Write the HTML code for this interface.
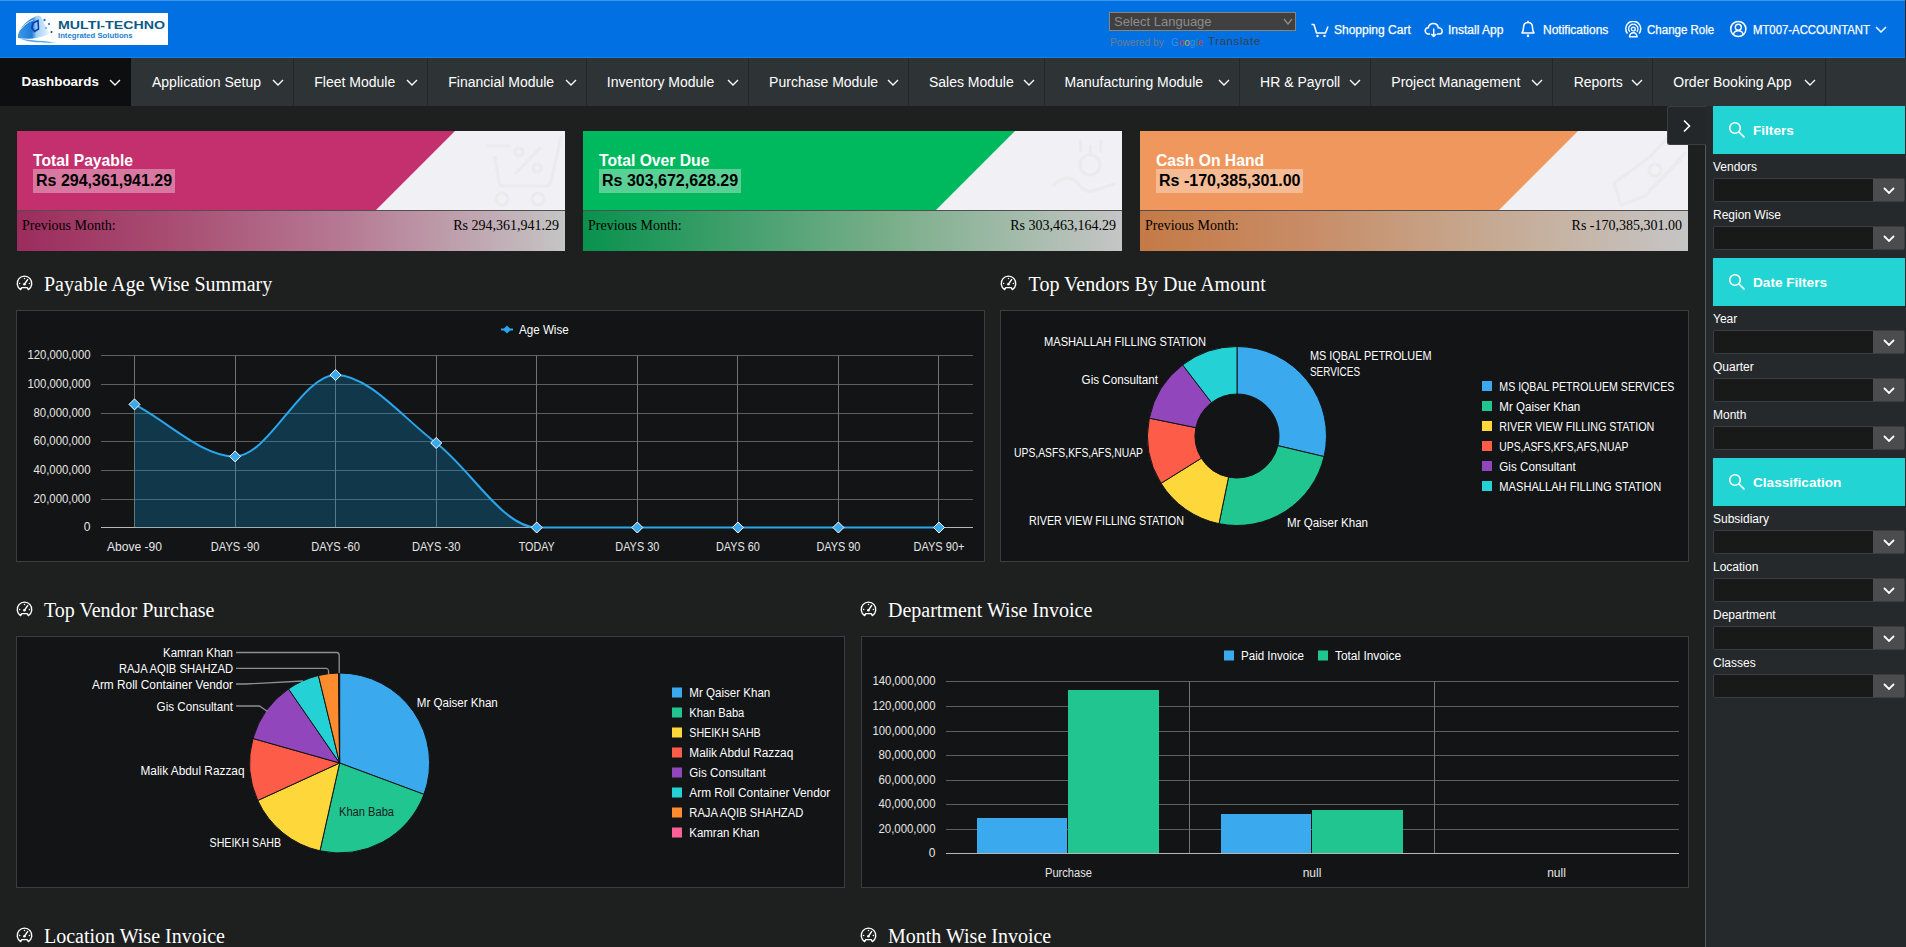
<!DOCTYPE html>
<html><head><meta charset="utf-8"><style>
*{box-sizing:border-box;margin:0;padding:0}
html,body{width:1906px;height:947px;overflow:hidden;background:#1e201f;font-family:"Liberation Sans",sans-serif;color:#fff}
.a{position:absolute;white-space:nowrap;line-height:1}
#hdr{position:absolute;left:0;top:0;width:1906px;height:58px;background:#0070e3;border-top:1px solid #3c96e9;border-bottom:1px solid #0a86ec}
#nav{position:absolute;left:0;top:58px;width:1906px;height:48px;background:#2e3336}
.sep{position:absolute;top:0;width:1px;height:48px;background:#23272a}
.nt{position:absolute;top:17px;font-size:14px;line-height:14px;color:#fff;white-space:nowrap}
.card{position:absolute;top:131px;height:120px;overflow:hidden}
.card .wt{position:absolute;top:0;right:0;width:200px;height:79px;background:#f1f1f5}
.card .ttl{position:absolute;left:16px;top:22px;font-weight:bold;font-size:15.7px;line-height:16px;color:#fff;white-space:nowrap}
.card .amt{position:absolute;left:16px;top:38px;height:24px;padding:0 3px;font-weight:bold;font-size:16px;line-height:24px;color:#000;background:rgba(255,255,255,.35);white-space:nowrap}
.card .bot{position:absolute;left:0;top:79px;right:0;height:41px;border-top:1px solid #505050}
.card .pm{position:absolute;left:5px;top:8px;font-family:"Liberation Serif",serif;font-size:14px;line-height:14px;color:#000;white-space:nowrap}
.card .pr{position:absolute;right:6px;top:8px;font-family:"Liberation Serif",serif;font-size:14px;line-height:14px;color:#000;white-space:nowrap}
.stitle{position:absolute;font-family:"Liberation Serif",serif;font-size:20px;line-height:20px;color:#fff;white-space:nowrap}
.panel{position:absolute;background:#121416;border:1px solid #3b3d3f}
#side{position:absolute;left:1705px;top:106px;width:201px;height:841px;background:#25292c;border-left:1px solid #55585b}
.sh{position:absolute;left:7px;width:192px;height:48px;background:#23d4d4}
.sh span{position:absolute;left:40px;top:17.5px;font-size:13.6px;line-height:14px;font-weight:bold;color:#fff;white-space:nowrap}
.sh svg{position:absolute;left:14.5px;top:15px}
.sl{position:absolute;left:7px;font-size:12px;line-height:12px;color:#fff;white-space:nowrap}
.ss{position:absolute;left:7px;width:192px;height:24px;background:#181a19;border:1px solid #3a3d40;border-radius:2px}
.ss i{position:absolute;right:0;top:0;width:31px;height:22px;background:#4b4c4e}
.ss svg{position:absolute;right:9px;top:8px}
.hi{position:absolute;top:24px;font-size:12px;line-height:12px;color:#fff;white-space:nowrap;-webkit-text-stroke:0.25px #fff}
</style></head><body>
<div id="hdr"></div>
<div class="a" style="left:16px;top:13px;width:152px;height:32px;background:#fff;overflow:hidden"><svg class="a" style="left:0;top:0" width="44" height="32"><defs><linearGradient id="lg1" x1="0" y1="0" x2="1" y2="0"><stop offset="0" stop-color="#3d9ae6"/><stop offset="0.45" stop-color="#1f7ad8"/><stop offset="0.6" stop-color="#9fd0f5"/><stop offset="1" stop-color="#e4f3fd"/></linearGradient></defs><path d="M2 22 C4 14 12 6 22 2.5 L25 3.5 L33 21 C25 25 12 27 2 25 Z" fill="url(#lg1)"/><path d="M4 17 C8 12 12 9 17 7" stroke="#cfe8fb" stroke-width="1" fill="none"/><path d="M4 25.5 C12 29.5 26 30 41 29.5 C28 28 14 27.5 4 25.5Z" fill="#4aa8ec"/><path d="M17 10 L22 7.5 L22.5 16 L18.5 18.5 L16 15 Z" fill="none" stroke="#0a3cae" stroke-width="1.6"/><circle cx="28.5" cy="7" r="1.2" fill="#1f7ad8"/><circle cx="33" cy="11" r="1.1" fill="#1f6fd0"/><circle cx="35.5" cy="19" r="1" fill="#0a3cae"/><circle cx="30" cy="15" r="1.1" fill="#5ab4ee"/></svg><div class="a" style="left:42px;top:8px;font-weight:bold;font-size:10px;color:#0b5a86;transform-origin:0 0;transform:scaleX(1.42)">MULTI-TECHNO</div><div class="a" style="left:42px;top:19px;font-weight:bold;font-size:8px;color:#1a7fd0;transform-origin:0 0;transform:scaleX(0.965)">Integrated Solutions</div></div>
<div class="a" style="left:1109px;top:12px;width:187px;height:19px;background:#404040;border:1px solid #8e8478"></div>
<div class="a" style="left:1114px;top:15px;font-size:13px;line-height:13px;color:#8c8c8c">Select Language</div>
<svg class="a" style="left:1283px;top:18px" width="10" height="7"><path d="M1 1 L5.0 6 L9 1" fill="none" stroke="#8c8c8c" stroke-width="1.3"/></svg>
<div class="a" style="left:1110px;top:37px;font-size:10.5px;line-height:11px;color:#6b7d90;transform-origin:0 0;transform:scaleX(.97)">Powered by</div>
<div class="a" style="left:1171px;top:37px;font-size:10.5px;line-height:11px;opacity:.85;transform-origin:0 0;transform:scaleX(.95)"><span style="color:#4a90e2">G</span><span style="color:#d8453a">o</span><span style="color:#e8b400">o</span><span style="color:#4a90e2">g</span><span style="color:#2ea44f">l</span><span style="color:#d8453a">e</span></div>
<div class="a" style="left:1208px;top:36px;font-size:11.5px;line-height:11px;color:#3a3f48;letter-spacing:.6px">Translate</div>
<svg class="a" style="left:1310px;top:22px" width="20" height="16"><path d="M1.5 2.5 H4 L6.5 11 H15.5 L18 4.5" fill="none" stroke="#fff" stroke-width="1.5" stroke-linejoin="round"/><circle cx="7.5" cy="14" r="1.2" fill="#fff"/><circle cx="14.5" cy="14" r="1.2" fill="#fff"/></svg>
<div class="hi" style="left:1334px">Shopping Cart</div>
<svg class="a" style="left:1424px;top:22px" width="20" height="16"><path d="M6 12 H4.5 C2.5 12 1.2 10.5 1.2 8.8 C1.2 7 2.6 5.7 4.3 5.7 C4.8 3.2 6.8 1.5 9.3 1.5 C12 1.5 14 3.5 14.3 5.8 C16.5 5.8 18.2 7.3 18.2 9.2 C18.2 10.8 17 12 15.3 12 H13" fill="none" stroke="#fff" stroke-width="1.5"/><path d="M9.7 6.5 V14.5 M7.2 12 L9.7 14.5 L12.2 12" fill="none" stroke="#fff" stroke-width="1.5"/></svg>
<div class="hi" style="left:1448px">Install App</div>
<svg class="a" style="left:1519px;top:20px" width="18" height="18"><path d="M3 13 C4.3 11.5 4.5 10 4.5 7.5 C4.5 4.5 6.3 2.5 9 2.5 C11.7 2.5 13.5 4.5 13.5 7.5 C13.5 10 13.7 11.5 15 13 Z" fill="none" stroke="#fff" stroke-width="1.5" stroke-linejoin="round"/><path d="M9 0.8 V2.5" stroke="#fff" stroke-width="1.5"/><circle cx="9" cy="15.8" r="1.3" fill="#fff"/></svg>
<div class="hi" style="left:1543px">Notifications</div>
<svg class="a" style="left:1624px;top:21px" width="19" height="17"><path d="M3.5 12.5 A7.5 7.5 0 1 1 15 12.5" fill="none" stroke="#fff" stroke-width="1.5"/><path d="M5.8 10.8 A4.6 4.6 0 1 1 12.8 10.8" fill="none" stroke="#fff" stroke-width="1.4"/><circle cx="9.3" cy="8" r="1.9" fill="none" stroke="#fff" stroke-width="1.4"/><path d="M5.5 15.8 C5.8 13 7.3 11.7 9.3 11.7 C11.3 11.7 12.8 13 13.1 15.8 Z" fill="none" stroke="#fff" stroke-width="1.4"/></svg>
<div class="hi" style="left:1647px;transform-origin:0 0;transform:scaleX(.96)">Change Role</div>
<svg class="a" style="left:1729px;top:20px" width="19" height="18"><circle cx="9.3" cy="9" r="7.6" fill="none" stroke="#fff" stroke-width="1.5"/><circle cx="9.3" cy="7.3" r="3" fill="none" stroke="#fff" stroke-width="1.4"/><path d="M4.3 14.6 C5 12 7 10.8 9.3 10.8 C11.6 10.8 13.6 12 14.3 14.6" fill="none" stroke="#fff" stroke-width="1.4"/></svg>
<div class="hi" style="left:1753px;transform-origin:0 0;transform:scaleX(.945)">MT007-ACCOUNTANT</div>
<svg class="a" style="left:1875px;top:26px" width="12" height="7"><path d="M1 1 L6.0 6 L11 1" fill="none" stroke="#fff" stroke-width="1.5"/></svg>
<div class="a" style="left:1905px;top:0;width:1px;height:58px;background:#2a2a2a"></div>
<div id="nav"></div>
<div class="a" style="left:0;top:58px;width:131px;height:48px;background:#0d0e10"></div>
<div class="sep" style="left:293px;top:58px"></div>
<div class="sep" style="left:427px;top:58px"></div>
<div class="sep" style="left:586px;top:58px"></div>
<div class="sep" style="left:748px;top:58px"></div>
<div class="sep" style="left:908px;top:58px"></div>
<div class="sep" style="left:1044px;top:58px"></div>
<div class="sep" style="left:1239px;top:58px"></div>
<div class="sep" style="left:1370px;top:58px"></div>
<div class="sep" style="left:1552px;top:58px"></div>
<div class="sep" style="left:1652px;top:58px"></div>
<div class="sep" style="left:1825px;top:58px"></div>
<div class="nt" style="left:21.5px;top:75px;font-weight:bold;font-size:13.4px;">Dashboards</div>
<svg class="a" style="left:109px;top:79px" width="12" height="7"><path d="M1 1 L6.0 6 L11 1" fill="none" stroke="#fff" stroke-width="1.4"/></svg>
<div class="nt" style="left:152px;top:75px;">Application Setup</div>
<svg class="a" style="left:271.5px;top:79px" width="12" height="7"><path d="M1 1 L6.0 6 L11 1" fill="none" stroke="#fff" stroke-width="1.4"/></svg>
<div class="nt" style="left:314.3px;top:75px;">Fleet Module</div>
<svg class="a" style="left:405.5px;top:79px" width="12" height="7"><path d="M1 1 L6.0 6 L11 1" fill="none" stroke="#fff" stroke-width="1.4"/></svg>
<div class="nt" style="left:448.3px;top:75px;">Financial Module</div>
<svg class="a" style="left:564.5px;top:79px" width="12" height="7"><path d="M1 1 L6.0 6 L11 1" fill="none" stroke="#fff" stroke-width="1.4"/></svg>
<div class="nt" style="left:606.8px;top:75px;">Inventory Module</div>
<svg class="a" style="left:726.5px;top:79px" width="12" height="7"><path d="M1 1 L6.0 6 L11 1" fill="none" stroke="#fff" stroke-width="1.4"/></svg>
<div class="nt" style="left:769.1px;top:75px;">Purchase Module</div>
<svg class="a" style="left:886.5px;top:79px" width="12" height="7"><path d="M1 1 L6.0 6 L11 1" fill="none" stroke="#fff" stroke-width="1.4"/></svg>
<div class="nt" style="left:928.9px;top:75px;">Sales Module</div>
<svg class="a" style="left:1022.5px;top:79px" width="12" height="7"><path d="M1 1 L6.0 6 L11 1" fill="none" stroke="#fff" stroke-width="1.4"/></svg>
<div class="nt" style="left:1064.5px;top:75px;">Manufacturing Module</div>
<svg class="a" style="left:1217.5px;top:79px" width="12" height="7"><path d="M1 1 L6.0 6 L11 1" fill="none" stroke="#fff" stroke-width="1.4"/></svg>
<div class="nt" style="left:1260.1px;top:75px;">HR &amp; Payroll</div>
<svg class="a" style="left:1348.5px;top:79px" width="12" height="7"><path d="M1 1 L6.0 6 L11 1" fill="none" stroke="#fff" stroke-width="1.4"/></svg>
<div class="nt" style="left:1391.3px;top:75px;">Project Management</div>
<svg class="a" style="left:1530.5px;top:79px" width="12" height="7"><path d="M1 1 L6.0 6 L11 1" fill="none" stroke="#fff" stroke-width="1.4"/></svg>
<div class="nt" style="left:1573.7px;top:75px;">Reports</div>
<svg class="a" style="left:1630.5px;top:79px" width="12" height="7"><path d="M1 1 L6.0 6 L11 1" fill="none" stroke="#fff" stroke-width="1.4"/></svg>
<div class="nt" style="left:1673.3px;top:75px;">Order Booking App</div>
<svg class="a" style="left:1803.5px;top:79px" width="12" height="7"><path d="M1 1 L6.0 6 L11 1" fill="none" stroke="#fff" stroke-width="1.4"/></svg>
<div class="card" style="left:17px;width:548px;background:#c4306d"><svg class="a" style="left:359px;top:0" width="189" height="79"><path d="M79 0 H189 V79 H0 Z" fill="#f1f1f5"/><g transform="translate(-376,-131)"><path d="M488 146 H509" fill="none" stroke="#ebebee" stroke-width="3.2" stroke-linecap="round" stroke-linejoin="round"/><path d="M495 157 L499 182 Q500 186 505 186 H545 Q550 186 551 181 L561 137" fill="none" stroke="#ebebee" stroke-width="3.2" stroke-linecap="round" stroke-linejoin="round"/><circle cx="502" cy="199" r="6" fill="none" stroke="#ebebee" stroke-width="3.2" stroke-linecap="round" stroke-linejoin="round"/><circle cx="538" cy="199" r="6" fill="none" stroke="#ebebee" stroke-width="3.2" stroke-linecap="round" stroke-linejoin="round"/><circle cx="519" cy="152" r="4" fill="none" stroke="#ebebee" stroke-width="3.2" stroke-linecap="round" stroke-linejoin="round"/><circle cx="537" cy="168" r="4" fill="none" stroke="#ebebee" stroke-width="3.2" stroke-linecap="round" stroke-linejoin="round"/><path d="M516 173 L540 148" fill="none" stroke="#ebebee" stroke-width="3.2" stroke-linecap="round" stroke-linejoin="round"/></g></svg><div class="ttl">Total Payable</div><div class="amt">Rs 294,361,941.29</div><div class="bot" style="background:linear-gradient(90deg,#9c2c5e 0%,#a95073 30%,#b67a93 60%,#c5c5c5 100%)"><div class="pm">Previous Month:</div><div class="pr">Rs 294,361,941.29</div></div></div>
<div class="card" style="left:583px;width:539px;background:#00b85e"><svg class="a" style="left:353px;top:0" width="189" height="79"><path d="M79 0 H189 V79 H0 Z" fill="#f1f1f5"/><g transform="translate(-936,-131)"><path d="M1080.5 141 V151 M1100.5 141 V151 M1090.5 146 V152" fill="none" stroke="#ebebee" stroke-width="3.2" stroke-linecap="round" stroke-linejoin="round"/><circle cx="1090" cy="165" r="10" fill="none" stroke="#ebebee" stroke-width="3.2" stroke-linecap="round" stroke-linejoin="round"/><path d="M1054 185 Q1066 172 1078 183 Q1086 195 1096 190 L1114 184" fill="none" stroke="#ebebee" stroke-width="3.2" stroke-linecap="round" stroke-linejoin="round" stroke-width="4.5"/></g></svg><div class="ttl">Total Over Due</div><div class="amt">Rs 303,672,628.29</div><div class="bot" style="background:linear-gradient(90deg,#08924e 0%,#45a06e 30%,#7fb08e 60%,#c5c5c5 100%)"><div class="pm">Previous Month:</div><div class="pr">Rs 303,463,164.29</div></div></div>
<div class="card" style="left:1140px;width:548px;background:#f0975d"><svg class="a" style="left:359px;top:0" width="189" height="79"><path d="M79 0 H189 V79 H0 Z" fill="#f1f1f5"/><g transform="translate(-1499,-131)"><path d="M1614 183 L1621 205 L1645 196 L1670 170 L1685 153" fill="none" stroke="#ebebee" stroke-width="3.2" stroke-linecap="round" stroke-linejoin="round"/><path d="M1614 183 L1650 157 L1668 137" fill="none" stroke="#ebebee" stroke-width="3.2" stroke-linecap="round" stroke-linejoin="round"/><circle cx="1655" cy="170" r="6" fill="none" stroke="#ebebee" stroke-width="3.2" stroke-linecap="round" stroke-linejoin="round"/><path d="M1650 190 L1680 160" fill="none" stroke="#ebebee" stroke-width="3.2" stroke-linecap="round" stroke-linejoin="round"/></g></svg><div class="ttl">Cash On Hand</div><div class="amt">Rs -170,385,301.00</div><div class="bot" style="background:linear-gradient(90deg,#c47a46 0%,#c88c66 30%,#c6a68c 60%,#c5c5c5 100%)"><div class="pm">Previous Month:</div><div class="pr">Rs -170,385,301.00</div></div></div>
<svg class="a" style="left:16px;top:275px" width="17" height="16"><path d="M4.6 14.6 A7.3 7.3 0 1 1 12.4 14.6 L11.2 12.6 H5.8 Z" fill="none" stroke="#fff" stroke-width="1.4" stroke-linejoin="round"/><path d="M8.5 9.2 L11.6 4.6" stroke="#fff" stroke-width="1.5" stroke-linecap="round"/><circle cx="8.4" cy="9.3" r="1.3" fill="#fff"/><circle cx="3.6" cy="8.4" r=".75" fill="#fff"/><circle cx="8.5" cy="3.5" r=".75" fill="#fff"/><circle cx="13.4" cy="8.4" r=".75" fill="#fff"/></svg>
<div class="stitle" style="left:44px;top:274px">Payable Age Wise Summary</div>
<svg class="a" style="left:1000px;top:275px" width="17" height="16"><path d="M4.6 14.6 A7.3 7.3 0 1 1 12.4 14.6 L11.2 12.6 H5.8 Z" fill="none" stroke="#fff" stroke-width="1.4" stroke-linejoin="round"/><path d="M8.5 9.2 L11.6 4.6" stroke="#fff" stroke-width="1.5" stroke-linecap="round"/><circle cx="8.4" cy="9.3" r="1.3" fill="#fff"/><circle cx="3.6" cy="8.4" r=".75" fill="#fff"/><circle cx="8.5" cy="3.5" r=".75" fill="#fff"/><circle cx="13.4" cy="8.4" r=".75" fill="#fff"/></svg>
<div class="stitle" style="left:1028.6px;top:274px">Top Vendors By Due Amount</div>
<svg class="a" style="left:16px;top:601px" width="17" height="16"><path d="M4.6 14.6 A7.3 7.3 0 1 1 12.4 14.6 L11.2 12.6 H5.8 Z" fill="none" stroke="#fff" stroke-width="1.4" stroke-linejoin="round"/><path d="M8.5 9.2 L11.6 4.6" stroke="#fff" stroke-width="1.5" stroke-linecap="round"/><circle cx="8.4" cy="9.3" r="1.3" fill="#fff"/><circle cx="3.6" cy="8.4" r=".75" fill="#fff"/><circle cx="8.5" cy="3.5" r=".75" fill="#fff"/><circle cx="13.4" cy="8.4" r=".75" fill="#fff"/></svg>
<div class="stitle" style="left:44px;top:600px">Top Vendor Purchase</div>
<svg class="a" style="left:860px;top:601px" width="17" height="16"><path d="M4.6 14.6 A7.3 7.3 0 1 1 12.4 14.6 L11.2 12.6 H5.8 Z" fill="none" stroke="#fff" stroke-width="1.4" stroke-linejoin="round"/><path d="M8.5 9.2 L11.6 4.6" stroke="#fff" stroke-width="1.5" stroke-linecap="round"/><circle cx="8.4" cy="9.3" r="1.3" fill="#fff"/><circle cx="3.6" cy="8.4" r=".75" fill="#fff"/><circle cx="8.5" cy="3.5" r=".75" fill="#fff"/><circle cx="13.4" cy="8.4" r=".75" fill="#fff"/></svg>
<div class="stitle" style="left:888px;top:600px">Department Wise Invoice</div>
<svg class="a" style="left:16px;top:927px" width="17" height="16"><path d="M4.6 14.6 A7.3 7.3 0 1 1 12.4 14.6 L11.2 12.6 H5.8 Z" fill="none" stroke="#fff" stroke-width="1.4" stroke-linejoin="round"/><path d="M8.5 9.2 L11.6 4.6" stroke="#fff" stroke-width="1.5" stroke-linecap="round"/><circle cx="8.4" cy="9.3" r="1.3" fill="#fff"/><circle cx="3.6" cy="8.4" r=".75" fill="#fff"/><circle cx="8.5" cy="3.5" r=".75" fill="#fff"/><circle cx="13.4" cy="8.4" r=".75" fill="#fff"/></svg>
<div class="stitle" style="left:44px;top:926px">Location Wise Invoice</div>
<svg class="a" style="left:860px;top:927px" width="17" height="16"><path d="M4.6 14.6 A7.3 7.3 0 1 1 12.4 14.6 L11.2 12.6 H5.8 Z" fill="none" stroke="#fff" stroke-width="1.4" stroke-linejoin="round"/><path d="M8.5 9.2 L11.6 4.6" stroke="#fff" stroke-width="1.5" stroke-linecap="round"/><circle cx="8.4" cy="9.3" r="1.3" fill="#fff"/><circle cx="3.6" cy="8.4" r=".75" fill="#fff"/><circle cx="8.5" cy="3.5" r=".75" fill="#fff"/><circle cx="13.4" cy="8.4" r=".75" fill="#fff"/></svg>
<div class="stitle" style="left:888px;top:926px">Month Wise Invoice</div>
<div class="panel" style="left:16px;top:310px;width:969px;height:252px"></div>
<div class="panel" style="left:1000px;top:310px;width:689px;height:252px"></div>
<div class="panel" style="left:16px;top:636px;width:829px;height:252px"></div>
<div class="panel" style="left:861px;top:636px;width:828px;height:252px"></div>
<svg class="a" style="left:0;top:0" width="1906" height="947" font-family="Liberation Sans, sans-serif"><line x1="101" y1="527.5" x2="973" y2="527.5" stroke="#bcb6b0" stroke-width="1"/>
<text x="90.5" y="530.8" text-anchor="end" font-size="12" fill="#e8e6e2">0</text>
<line x1="101" y1="499.5" x2="973" y2="499.5" stroke="#5b6062" stroke-width="1"/>
<text x="90.5" y="502.8" text-anchor="end" font-size="12" fill="#e8e6e2" textLength="57" lengthAdjust="spacingAndGlyphs">20,000,000</text>
<line x1="101" y1="470.5" x2="973" y2="470.5" stroke="#5b6062" stroke-width="1"/>
<text x="90.5" y="473.8" text-anchor="end" font-size="12" fill="#e8e6e2" textLength="57" lengthAdjust="spacingAndGlyphs">40,000,000</text>
<line x1="101" y1="441.5" x2="973" y2="441.5" stroke="#5b6062" stroke-width="1"/>
<text x="90.5" y="444.8" text-anchor="end" font-size="12" fill="#e8e6e2" textLength="57" lengthAdjust="spacingAndGlyphs">60,000,000</text>
<line x1="101" y1="413.5" x2="973" y2="413.5" stroke="#5b6062" stroke-width="1"/>
<text x="90.5" y="416.8" text-anchor="end" font-size="12" fill="#e8e6e2" textLength="57" lengthAdjust="spacingAndGlyphs">80,000,000</text>
<line x1="101" y1="384.5" x2="973" y2="384.5" stroke="#5b6062" stroke-width="1"/>
<text x="90.5" y="387.8" text-anchor="end" font-size="12" fill="#e8e6e2" textLength="63" lengthAdjust="spacingAndGlyphs">100,000,000</text>
<line x1="101" y1="355.5" x2="973" y2="355.5" stroke="#5b6062" stroke-width="1"/>
<text x="90.5" y="358.8" text-anchor="end" font-size="12" fill="#e8e6e2" textLength="63" lengthAdjust="spacingAndGlyphs">120,000,000</text>
<line x1="134.5" y1="355.5" x2="134.5" y2="527" stroke="#6f7477" stroke-width="1"/>
<line x1="235.5" y1="355.5" x2="235.5" y2="527" stroke="#6f7477" stroke-width="1"/>
<line x1="335.5" y1="355.5" x2="335.5" y2="527" stroke="#6f7477" stroke-width="1"/>
<line x1="436.5" y1="355.5" x2="436.5" y2="527" stroke="#6f7477" stroke-width="1"/>
<line x1="536.5" y1="355.5" x2="536.5" y2="527" stroke="#6f7477" stroke-width="1"/>
<line x1="637.5" y1="355.5" x2="637.5" y2="527" stroke="#6f7477" stroke-width="1"/>
<line x1="737.5" y1="355.5" x2="737.5" y2="527" stroke="#6f7477" stroke-width="1"/>
<line x1="838.5" y1="355.5" x2="838.5" y2="527" stroke="#6f7477" stroke-width="1"/>
<line x1="938.5" y1="355.5" x2="938.5" y2="527" stroke="#6f7477" stroke-width="1"/>
<text x="134.5" y="551.0" text-anchor="middle" font-size="12" fill="#e6e6e6" textLength="55" lengthAdjust="spacingAndGlyphs">Above -90</text>
<text x="235.1" y="551.0" text-anchor="middle" font-size="12" fill="#e6e6e6" textLength="48.5" lengthAdjust="spacingAndGlyphs">DAYS -90</text>
<text x="335.6" y="551.0" text-anchor="middle" font-size="12" fill="#e6e6e6" textLength="48.5" lengthAdjust="spacingAndGlyphs">DAYS -60</text>
<text x="436.2" y="551.0" text-anchor="middle" font-size="12" fill="#e6e6e6" textLength="48.5" lengthAdjust="spacingAndGlyphs">DAYS -30</text>
<text x="536.7" y="551.0" text-anchor="middle" font-size="12" fill="#e6e6e6" textLength="36" lengthAdjust="spacingAndGlyphs">TODAY</text>
<text x="637.3" y="551.0" text-anchor="middle" font-size="12" fill="#e6e6e6" textLength="44" lengthAdjust="spacingAndGlyphs">DAYS 30</text>
<text x="737.9" y="551.0" text-anchor="middle" font-size="12" fill="#e6e6e6" textLength="44" lengthAdjust="spacingAndGlyphs">DAYS 60</text>
<text x="838.4" y="551.0" text-anchor="middle" font-size="12" fill="#e6e6e6" textLength="44" lengthAdjust="spacingAndGlyphs">DAYS 90</text>
<text x="939.0" y="551.0" text-anchor="middle" font-size="12" fill="#e6e6e6" textLength="51" lengthAdjust="spacingAndGlyphs">DAYS 90+</text>
<path d="M134.50 404.40 C168.02 421.73 201.54 456.40 235.06 456.40 C268.58 456.40 302.10 375.00 335.62 375.00 C369.14 375.00 402.66 417.88 436.18 443.00 C469.70 468.12 503.22 527.50 536.74 527.50 C570.26 527.50 603.78 527.50 637.30 527.50 C670.82 527.50 704.34 527.50 737.86 527.50 C771.38 527.50 804.90 527.50 838.42 527.50 C871.94 527.50 905.46 527.50 938.98 527.50 L939.0 527.5 L134.5 527.5 Z" fill="#0e8cc3" fill-opacity="0.3"/>
<path d="M134.50 404.40 C168.02 421.73 201.54 456.40 235.06 456.40 C268.58 456.40 302.10 375.00 335.62 375.00 C369.14 375.00 402.66 417.88 436.18 443.00 C469.70 468.12 503.22 527.50 536.74 527.50 C570.26 527.50 603.78 527.50 637.30 527.50 C670.82 527.50 704.34 527.50 737.86 527.50 C771.38 527.50 804.90 527.50 838.42 527.50 C871.94 527.50 905.46 527.50 938.98 527.50" fill="none" stroke="#2aa6ec" stroke-width="2"/>
<path d="M134.5 398.9 L140.0 404.4 L134.5 409.9 L129.0 404.4 Z" fill="#3aa9ee" stroke="#fff" stroke-width="1"/>
<path d="M235.1 450.9 L240.6 456.4 L235.1 461.9 L229.6 456.4 Z" fill="#3aa9ee" stroke="#fff" stroke-width="1"/>
<path d="M335.6 369.5 L341.1 375.0 L335.6 380.5 L330.1 375.0 Z" fill="#3aa9ee" stroke="#fff" stroke-width="1"/>
<path d="M436.2 437.5 L441.7 443.0 L436.2 448.5 L430.7 443.0 Z" fill="#3aa9ee" stroke="#fff" stroke-width="1"/>
<path d="M536.7 522.0 L542.2 527.5 L536.7 533.0 L531.2 527.5 Z" fill="#3aa9ee" stroke="#fff" stroke-width="1"/>
<path d="M637.3 522.0 L642.8 527.5 L637.3 533.0 L631.8 527.5 Z" fill="#3aa9ee" stroke="#fff" stroke-width="1"/>
<path d="M737.9 522.0 L743.4 527.5 L737.9 533.0 L732.4 527.5 Z" fill="#3aa9ee" stroke="#fff" stroke-width="1"/>
<path d="M838.4 522.0 L843.9 527.5 L838.4 533.0 L832.9 527.5 Z" fill="#3aa9ee" stroke="#fff" stroke-width="1"/>
<path d="M939.0 522.0 L944.5 527.5 L939.0 533.0 L933.5 527.5 Z" fill="#3aa9ee" stroke="#fff" stroke-width="1"/>
<line x1="501" y1="329.5" x2="513" y2="329.5" stroke="#2aa6ec" stroke-width="2"/><path d="M507 325.5 L511 329.5 L507 333.5 L503 329.5Z" fill="#2aa6ec"/>
<text x="519.0" y="333.8" text-anchor="start" font-size="12" fill="#fff" textLength="49.7" lengthAdjust="spacingAndGlyphs">Age Wise</text><path d="M1237.00 346.50 A89.5 89.5 0 0 1 1324.10 456.59 L1277.87 445.66 A42 42 0 0 0 1237.00 394.00 Z" fill="#3aa9ee" stroke="#121416" stroke-width="1"/>
<path d="M1324.10 456.59 A89.5 89.5 0 0 1 1219.00 523.67 L1228.55 477.14 A42 42 0 0 0 1277.87 445.66 Z" fill="#20c590" stroke="#121416" stroke-width="1"/>
<path d="M1219.00 523.67 A89.5 89.5 0 0 1 1161.02 483.30 L1201.34 458.19 A42 42 0 0 0 1228.55 477.14 Z" fill="#fed83b" stroke="#121416" stroke-width="1"/>
<path d="M1161.02 483.30 A89.5 89.5 0 0 1 1149.30 418.16 L1195.84 427.63 A42 42 0 0 0 1201.34 458.19 Z" fill="#fd5c49" stroke="#121416" stroke-width="1"/>
<path d="M1149.30 418.16 A89.5 89.5 0 0 1 1182.64 364.90 L1211.49 402.63 A42 42 0 0 0 1195.84 427.63 Z" fill="#9246bb" stroke="#121416" stroke-width="1"/>
<path d="M1182.64 364.90 A89.5 89.5 0 0 1 1237.00 346.50 L1237.00 394.00 A42 42 0 0 0 1211.49 402.63 Z" fill="#24d2d5" stroke="#121416" stroke-width="1"/>
<text x="1044.0" y="346.0" text-anchor="start" font-size="12" fill="#fff" textLength="162" lengthAdjust="spacingAndGlyphs">MASHALLAH FILLING STATION</text>
<text x="1310.0" y="360.0" text-anchor="start" font-size="12" fill="#fff" textLength="121.5" lengthAdjust="spacingAndGlyphs">MS IQBAL PETROLUEM</text>
<text x="1310.0" y="376.0" text-anchor="start" font-size="12" fill="#fff" textLength="50" lengthAdjust="spacingAndGlyphs">SERVICES</text>
<text x="1081.6" y="384.0" text-anchor="start" font-size="12" fill="#fff" textLength="76.4" lengthAdjust="spacingAndGlyphs">Gis Consultant</text>
<text x="1014.0" y="457.0" text-anchor="start" font-size="12" fill="#fff" textLength="129" lengthAdjust="spacingAndGlyphs">UPS,ASFS,KFS,AFS,NUAP</text>
<text x="1029.0" y="525.0" text-anchor="start" font-size="12" fill="#fff" textLength="155" lengthAdjust="spacingAndGlyphs">RIVER VIEW FILLING STATION</text>
<text x="1287.0" y="527.0" text-anchor="start" font-size="12" fill="#fff" textLength="81" lengthAdjust="spacingAndGlyphs">Mr Qaiser Khan</text>
<rect x="1482" y="381" width="10" height="10" fill="#3aa9ee"/>
<text x="1499.3" y="390.5" text-anchor="start" font-size="12" fill="#fff" textLength="175" lengthAdjust="spacingAndGlyphs">MS IQBAL PETROLUEM SERVICES</text>
<rect x="1482" y="401" width="10" height="10" fill="#20c590"/>
<text x="1499.3" y="410.5" text-anchor="start" font-size="12" fill="#fff" textLength="81" lengthAdjust="spacingAndGlyphs">Mr Qaiser Khan</text>
<rect x="1482" y="421" width="10" height="10" fill="#fed83b"/>
<text x="1499.3" y="430.5" text-anchor="start" font-size="12" fill="#fff" textLength="155" lengthAdjust="spacingAndGlyphs">RIVER VIEW FILLING STATION</text>
<rect x="1482" y="441" width="10" height="10" fill="#fd5c49"/>
<text x="1499.3" y="450.5" text-anchor="start" font-size="12" fill="#fff" textLength="129" lengthAdjust="spacingAndGlyphs">UPS,ASFS,KFS,AFS,NUAP</text>
<rect x="1482" y="461" width="10" height="10" fill="#9246bb"/>
<text x="1499.3" y="470.5" text-anchor="start" font-size="12" fill="#fff" textLength="76.4" lengthAdjust="spacingAndGlyphs">Gis Consultant</text>
<rect x="1482" y="481" width="10" height="10" fill="#24d2d5"/>
<text x="1499.3" y="490.5" text-anchor="start" font-size="12" fill="#fff" textLength="162" lengthAdjust="spacingAndGlyphs">MASHALLAH FILLING STATION</text><path d="M339.6 763 L339.60 673.00 A90 90 0 0 1 423.96 794.37 Z" fill="#3aa9ee" stroke="#121416" stroke-width="1"/>
<path d="M339.6 763 L423.96 794.37 A90 90 0 0 1 319.97 850.83 Z" fill="#20c590" stroke="#121416" stroke-width="1"/>
<path d="M339.6 763 L319.97 850.83 A90 90 0 0 1 257.77 800.47 Z" fill="#fed83b" stroke="#121416" stroke-width="1"/>
<path d="M339.6 763 L257.77 800.47 A90 90 0 0 1 253.00 738.49 Z" fill="#fd5c49" stroke="#121416" stroke-width="1"/>
<path d="M339.6 763 L253.00 738.49 A90 90 0 0 1 288.49 688.92 Z" fill="#9246bb" stroke="#121416" stroke-width="1"/>
<path d="M339.6 763 L288.49 688.92 A90 90 0 0 1 318.44 675.52 Z" fill="#24d2d5" stroke="#121416" stroke-width="1"/>
<path d="M339.6 763 L318.44 675.52 A90 90 0 0 1 338.50 673.01 Z" fill="#fd8c2f" stroke="#121416" stroke-width="1"/>
<path d="M339.6 763 L338.50 673.01 A90 90 0 0 1 339.60 673.00 Z" fill="#fd5f99" stroke="#121416" stroke-width="1"/>
<path d="M236 652.5 H336.5 Q339.2 652.5 339.2 655.5 V673" fill="none" stroke="#8b9094" stroke-width="1.3"/>
<path d="M236 668.3 H326.5 Q328.3 668.5 328.6 671 V674" fill="none" stroke="#8b9094" stroke-width="1.3"/>
<path d="M236 684 H246 L303 681" fill="none" stroke="#8b9094" stroke-width="1.3"/>
<path d="M236 706 H259.5 L267.5 711.5" fill="none" stroke="#8b9094" stroke-width="1.3"/>
<text x="233.0" y="657.0" text-anchor="end" font-size="12" fill="#fff" textLength="70" lengthAdjust="spacingAndGlyphs">Kamran Khan</text>
<text x="233.0" y="673.0" text-anchor="end" font-size="12" fill="#fff" textLength="114" lengthAdjust="spacingAndGlyphs">RAJA AQIB SHAHZAD</text>
<text x="233.0" y="689.0" text-anchor="end" font-size="12" fill="#fff" textLength="141" lengthAdjust="spacingAndGlyphs">Arm Roll Container Vendor</text>
<text x="233.0" y="711.0" text-anchor="end" font-size="12" fill="#fff" textLength="76.4" lengthAdjust="spacingAndGlyphs">Gis Consultant</text>
<text x="244.5" y="775.0" text-anchor="end" font-size="12" fill="#fff" textLength="104" lengthAdjust="spacingAndGlyphs">Malik Abdul Razzaq</text>
<text x="209.6" y="847.0" text-anchor="start" font-size="12" fill="#fff" textLength="71.4" lengthAdjust="spacingAndGlyphs">SHEIKH SAHB</text>
<text x="339.0" y="816.0" text-anchor="start" font-size="12" fill="#1c1c1c" textLength="55" lengthAdjust="spacingAndGlyphs">Khan Baba</text>
<text x="416.8" y="707.0" text-anchor="start" font-size="12" fill="#fff" textLength="81" lengthAdjust="spacingAndGlyphs">Mr Qaiser Khan</text>
<rect x="672" y="687.5" width="10" height="10" fill="#3aa9ee"/>
<text x="689.3" y="697.0" text-anchor="start" font-size="12" fill="#fff" textLength="81" lengthAdjust="spacingAndGlyphs">Mr Qaiser Khan</text>
<rect x="672" y="707.5" width="10" height="10" fill="#20c590"/>
<text x="689.3" y="717.0" text-anchor="start" font-size="12" fill="#fff" textLength="55" lengthAdjust="spacingAndGlyphs">Khan Baba</text>
<rect x="672" y="727.5" width="10" height="10" fill="#fed83b"/>
<text x="689.3" y="737.0" text-anchor="start" font-size="12" fill="#fff" textLength="71.4" lengthAdjust="spacingAndGlyphs">SHEIKH SAHB</text>
<rect x="672" y="747.5" width="10" height="10" fill="#fd5c49"/>
<text x="689.3" y="757.0" text-anchor="start" font-size="12" fill="#fff" textLength="104" lengthAdjust="spacingAndGlyphs">Malik Abdul Razzaq</text>
<rect x="672" y="767.5" width="10" height="10" fill="#9246bb"/>
<text x="689.3" y="777.0" text-anchor="start" font-size="12" fill="#fff" textLength="76.4" lengthAdjust="spacingAndGlyphs">Gis Consultant</text>
<rect x="672" y="787.5" width="10" height="10" fill="#24d2d5"/>
<text x="689.3" y="797.0" text-anchor="start" font-size="12" fill="#fff" textLength="141" lengthAdjust="spacingAndGlyphs">Arm Roll Container Vendor</text>
<rect x="672" y="807.5" width="10" height="10" fill="#fd8c2f"/>
<text x="689.3" y="817.0" text-anchor="start" font-size="12" fill="#fff" textLength="114" lengthAdjust="spacingAndGlyphs">RAJA AQIB SHAHZAD</text>
<rect x="672" y="827.5" width="10" height="10" fill="#fd5f99"/>
<text x="689.3" y="837.0" text-anchor="start" font-size="12" fill="#fff" textLength="70" lengthAdjust="spacingAndGlyphs">Kamran Khan</text><line x1="946" y1="853.5" x2="1679" y2="853.5" stroke="#bcb6b0" stroke-width="1"/>
<text x="935.5" y="856.8" text-anchor="end" font-size="12" fill="#e8e6e2">0</text>
<line x1="946" y1="829.5" x2="1679" y2="829.5" stroke="#5b6062" stroke-width="1"/>
<text x="935.5" y="832.8" text-anchor="end" font-size="12" fill="#e8e6e2" textLength="57" lengthAdjust="spacingAndGlyphs">20,000,000</text>
<line x1="946" y1="804.5" x2="1679" y2="804.5" stroke="#5b6062" stroke-width="1"/>
<text x="935.5" y="807.8" text-anchor="end" font-size="12" fill="#e8e6e2" textLength="57" lengthAdjust="spacingAndGlyphs">40,000,000</text>
<line x1="946" y1="780.5" x2="1679" y2="780.5" stroke="#5b6062" stroke-width="1"/>
<text x="935.5" y="783.8" text-anchor="end" font-size="12" fill="#e8e6e2" textLength="57" lengthAdjust="spacingAndGlyphs">60,000,000</text>
<line x1="946" y1="755.5" x2="1679" y2="755.5" stroke="#5b6062" stroke-width="1"/>
<text x="935.5" y="758.8" text-anchor="end" font-size="12" fill="#e8e6e2" textLength="57" lengthAdjust="spacingAndGlyphs">80,000,000</text>
<line x1="946" y1="731.5" x2="1679" y2="731.5" stroke="#5b6062" stroke-width="1"/>
<text x="935.5" y="734.8" text-anchor="end" font-size="12" fill="#e8e6e2" textLength="63" lengthAdjust="spacingAndGlyphs">100,000,000</text>
<line x1="946" y1="706.5" x2="1679" y2="706.5" stroke="#5b6062" stroke-width="1"/>
<text x="935.5" y="709.8" text-anchor="end" font-size="12" fill="#e8e6e2" textLength="63" lengthAdjust="spacingAndGlyphs">120,000,000</text>
<line x1="946" y1="681.5" x2="1679" y2="681.5" stroke="#5b6062" stroke-width="1"/>
<text x="935.5" y="684.8" text-anchor="end" font-size="12" fill="#e8e6e2" textLength="63" lengthAdjust="spacingAndGlyphs">140,000,000</text>
<line x1="1189.5" y1="681.5" x2="1189.5" y2="853" stroke="#6f7477" stroke-width="1"/>
<line x1="1434.5" y1="681.5" x2="1434.5" y2="853" stroke="#6f7477" stroke-width="1"/>
<rect x="977" y="818" width="90" height="35" fill="#3aa9ee"/>
<rect x="1068" y="690" width="91" height="163" fill="#20c590"/>
<rect x="1221" y="814" width="90" height="39" fill="#3aa9ee"/>
<rect x="1312" y="810" width="91" height="43" fill="#20c590"/>
<text x="1068.5" y="877.0" text-anchor="middle" font-size="12" fill="#e6e6e6" textLength="47" lengthAdjust="spacingAndGlyphs">Purchase</text>
<text x="1312.0" y="877.0" text-anchor="middle" font-size="12" fill="#e6e6e6">null</text>
<text x="1556.5" y="877.0" text-anchor="middle" font-size="12" fill="#e6e6e6">null</text>
<rect x="1224" y="650.5" width="10" height="10" fill="#3aa9ee"/>
<text x="1241.0" y="660.0" text-anchor="start" font-size="12" fill="#fff" textLength="63" lengthAdjust="spacingAndGlyphs">Paid Invoice</text>
<rect x="1318" y="650.5" width="10" height="10" fill="#20c590"/>
<text x="1335.0" y="660.0" text-anchor="start" font-size="12" fill="#fff" textLength="66" lengthAdjust="spacingAndGlyphs">Total Invoice</text></svg>
<div id="side">
<div class="sh" style="top:0px"><svg width="18" height="18"><circle cx="7" cy="7" r="5.3" fill="none" stroke="#fff" stroke-width="1.6"/><path d="M11 11 L16 16" stroke="#fff" stroke-width="1.7" stroke-linecap="round"/></svg><span>Filters</span></div>
<div class="sh" style="top:152px"><svg width="18" height="18"><circle cx="7" cy="7" r="5.3" fill="none" stroke="#fff" stroke-width="1.6"/><path d="M11 11 L16 16" stroke="#fff" stroke-width="1.7" stroke-linecap="round"/></svg><span>Date Filters</span></div>
<div class="sh" style="top:352px"><svg width="18" height="18"><circle cx="7" cy="7" r="5.3" fill="none" stroke="#fff" stroke-width="1.6"/><path d="M11 11 L16 16" stroke="#fff" stroke-width="1.7" stroke-linecap="round"/></svg><span>Classification</span></div>
<div class="sl" style="top:55px">Vendors</div>
<div class="ss" style="top:72px"><i></i><svg  width="12" height="7"><path d="M1 1 L6.0 6 L11 1" fill="none" stroke="#fff" stroke-width="1.8"/></svg></div>
<div class="sl" style="top:103px">Region Wise</div>
<div class="ss" style="top:120px"><i></i><svg  width="12" height="7"><path d="M1 1 L6.0 6 L11 1" fill="none" stroke="#fff" stroke-width="1.8"/></svg></div>
<div class="sl" style="top:207px">Year</div>
<div class="ss" style="top:224px"><i></i><svg  width="12" height="7"><path d="M1 1 L6.0 6 L11 1" fill="none" stroke="#fff" stroke-width="1.8"/></svg></div>
<div class="sl" style="top:255px">Quarter</div>
<div class="ss" style="top:272px"><i></i><svg  width="12" height="7"><path d="M1 1 L6.0 6 L11 1" fill="none" stroke="#fff" stroke-width="1.8"/></svg></div>
<div class="sl" style="top:303px">Month</div>
<div class="ss" style="top:320px"><i></i><svg  width="12" height="7"><path d="M1 1 L6.0 6 L11 1" fill="none" stroke="#fff" stroke-width="1.8"/></svg></div>
<div class="sl" style="top:407px">Subsidiary</div>
<div class="ss" style="top:424px"><i></i><svg  width="12" height="7"><path d="M1 1 L6.0 6 L11 1" fill="none" stroke="#fff" stroke-width="1.8"/></svg></div>
<div class="sl" style="top:455px">Location</div>
<div class="ss" style="top:472px"><i></i><svg  width="12" height="7"><path d="M1 1 L6.0 6 L11 1" fill="none" stroke="#fff" stroke-width="1.8"/></svg></div>
<div class="sl" style="top:503px">Department</div>
<div class="ss" style="top:520px"><i></i><svg  width="12" height="7"><path d="M1 1 L6.0 6 L11 1" fill="none" stroke="#fff" stroke-width="1.8"/></svg></div>
<div class="sl" style="top:551px">Classes</div>
<div class="ss" style="top:568px"><i></i><svg  width="12" height="7"><path d="M1 1 L6.0 6 L11 1" fill="none" stroke="#fff" stroke-width="1.8"/></svg></div>
</div>
<div class="a" style="left:1667px;top:106px;width:39px;height:39px;background:#23272a;border:1px solid #3a3e41;border-right:none;border-radius:3px 0 0 3px"></div>
<svg class="a" style="left:1682px;top:119px" width="10" height="14"><path d="M2 1.5 L7.5 7 L2 12.5" fill="none" stroke="#fff" stroke-width="1.6"/></svg>
</body></html>
